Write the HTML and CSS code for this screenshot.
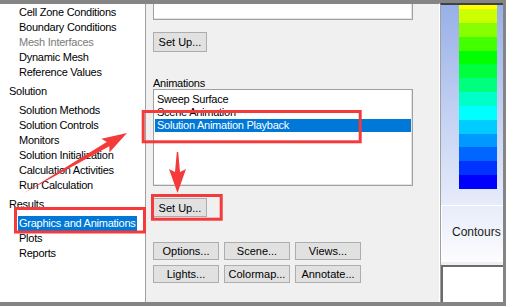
FILE: index.html
```html
<!DOCTYPE html>
<html>
  <head>
    <title>Graphics and Animations</title>
    <link rel="stylesheet" href="styles.css">
  </head>
  <body>
    <div class="frame">
      <!-- Navigation tree -->
      <div class="tree">
        <div class="item">Cell Zone Conditions</div>
        <div class="item">Boundary Conditions</div>
        <div class="item disabled">Mesh Interfaces</div>
        <div class="item">Dynamic Mesh</div>
        <div class="item">Reference Values</div>
        <div class="group">Solution</div>
        <div class="item">Solution Methods</div>
        <div class="item">Solution Controls</div>
        <div class="item">Monitors</div>
        <div class="item">Solution Initialization</div>
        <div class="item">Calculation Activities</div>
        <div class="item">Run Calculation</div>
        <div class="group">Results</div>
        <div class="item"><span class="selected">Graphics and Animations</span></div>
        <div class="item">Plots</div>
        <div class="item">Reports</div>
      </div>

      <!-- Task page -->
      <div class="task">
        <div class="list list-top"></div>
        <button class="btn setup">Set Up...</button>
        <div class="label">Animations</div>
        <div class="list list-anim">
          <div class="entry">Sweep Surface</div>
          <div class="entry">Scene Animation</div>
          <div class="entry selected">Solution Animation Playback</div>
        </div>
        <button class="btn setup setup-anim">Set Up...</button>
        <div class="btn-grid">
          <button class="btn">Options...</button>
          <button class="btn">Scene...</button>
          <button class="btn">Views...</button>
          <button class="btn">Lights...</button>
          <button class="btn">Colormap...</button>
          <button class="btn">Annotate...</button>
        </div>
      </div>

      <!-- Graphics window -->
      <div class="view">
        <div class="view-top">
          <div class="colormap">
            <div class="band band-top"></div>
            <div class="band band-1"></div>
            <div class="band band-2"></div>
            <div class="band band-3"></div>
            <div class="band band-4"></div>
            <div class="band band-5"></div>
            <div class="band band-6"></div>
            <div class="band band-7"></div>
            <div class="band band-8"></div>
            <div class="band band-9"></div>
            <div class="band band-10"></div>
            <div class="band band-11"></div>
            <div class="band band-12"></div>
            <div class="band band-13"></div>
          </div>
          <div class="caption">Contours</div>
        </div>
        <div class="strip"></div>
        <div class="console"></div>
      </div>
    </div>

    <!-- Red annotation marks drawn over the screenshot -->
    <svg class="marks" width="506" height="306" viewBox="0 0 506 306">
      <rect x="15.5" y="208.5" width="129" height="23.5" />
      <rect x="143.2" y="111.5" width="217" height="30.3" />
      <rect x="152.5" y="195.5" width="68.7" height="23.7" />
      <polygon class="arrow" points="24,193 109.3,146.3 109.4,152.5 127,133 101.4,138.7 106.7,141.9" />
      <polygon class="arrow" points="176.8,152 178.2,152 180,172 186,169 177.5,193 169,169 175,172" />
    </svg>
  </body>
</html>
```

FILE: styles.css
```css
/* Fluent style task panel */
body {
  margin: 0;
  font-family: "Liberation Sans", Arial, sans-serif;
  font-size: 11px;
  letter-spacing: -0.25px;
  color: #000;
}

.frame {
  display: flex;
  width: 503px;
  height: 299px;
  border-top: 3px solid #858585;
  border-right: 3px solid #858585;
  border-bottom: 4px solid #858585;
}

/* tree */
.tree {
  width: 145px;
  background-color: #fff;
  border-top: 1px solid #858585;
  border-right: 1px solid #a0a0a0;
  padding-top: 1px;
}

.item {
  line-height: 15px;
  padding-left: 19px;
  white-space: nowrap;
}

.group {
  line-height: 15px;
  padding-left: 9px;
  margin: 4px 0;
}

.disabled {
  color: #7a7a7a;
}

.selected {
  background-color: #0078d7;
  color: #fff;
}

.item .selected {
  display: inline-block;
  margin-left: -1px;
  padding: 0 1px;
}

/* task page */
.task {
  width: 286px;
  padding-left: 7px;
  background-color: #f0f0f0;
  border-top: 1px solid #858585;
  border-right: 1px solid #fff;
  display: flex;
  flex-direction: column;
  align-items: flex-start;
}

.list {
  box-sizing: border-box;
  width: 260px;
  background-color: #fff;
  border: 1px solid #a0a0a0;
  box-shadow: inset -1px -1px 0 #e3e3e3;
}

.list-top {
  height: 16px;
  border-top: none;
}

.label {
  margin-top: 26px;
  line-height: 11px;
}

.list-anim {
  height: 97px;
  padding: 3px 1px 0;
}

.entry {
  line-height: 13px;
  padding-left: 2px;
  white-space: nowrap;
}

.btn {
  box-sizing: border-box;
  padding: 0;
  border: 1px solid #adadad;
  background-color: #e1e1e1;
  font-family: "Liberation Sans", Arial, sans-serif;
  font-size: 11px;
  letter-spacing: 0;
  color: #000;
}

.setup {
  margin-top: 12px;
  width: 54px;
  height: 20px;
}

.setup-anim {
  height: 19px;
}

.btn-grid {
  margin-top: 25px;
  display: grid;
  grid-template-columns: repeat(3, 66px);
  grid-auto-rows: 18px;
  gap: 5px;
}

/* graphics window */
.view {
  width: 62px;
  border-left: 1px solid #a0a0a0;
  border-top: 2px solid #404040;
  display: flex;
  flex-direction: column;
}

.view-top {
  height: 257px;
  background: linear-gradient(#98b0e8, #fdfdff);
  display: flex;
  flex-direction: column;
}

.colormap {
  margin-left: 18px;
  width: 38px;
  height: 184px;
  display: flex;
  flex-direction: column;
}

.band {
  flex: 1;
}

.band-top {
  flex: none;
  height: 4px;
  background-color: #ffff00;
}

.band-1 { background-color: #ccff00; }
.band-2 { background-color: #88ff00; }
.band-3 { background-color: #44ff00; }
.band-4 { background-color: #00ff00; }
.band-5 { background-color: #00ff3c; }
.band-6 { background-color: #00ff7c; }
.band-7 { background-color: #00ffc8; }
.band-8 { background-color: #00ffff; }
.band-9 { background-color: #00ccff; }
.band-10 { background-color: #0099ff; }
.band-11 { background-color: #0066ff; }
.band-12 { background-color: #0033ff; }
.band-13 { background-color: #0000ff; }

.caption {
  flex: 1;
  margin-top: 16px;
  padding: 19px 0 0 10px;
  border-top: 1px solid #fff;
  border-left: 1px solid #fff;
  font-size: 12px;
  letter-spacing: 0;
  color: #1a1a1a;
  white-space: nowrap;
  overflow: hidden;
}

.strip {
  height: 3px;
  background-color: #f0f0f0;
}

.console {
  flex: 1;
  background-color: #fff;
  border-top: 2px solid #6b6b6b;
  border-left: 2px solid #6b6b6b;
}

/* annotations */
.marks {
  position: absolute;
  left: 0;
  top: 0;
  pointer-events: none;
}

.marks rect {
  fill: none;
  stroke: #f43a3a;
  stroke-width: 3;
}

.marks .arrow {
  fill: #f43a3a;
}
```
